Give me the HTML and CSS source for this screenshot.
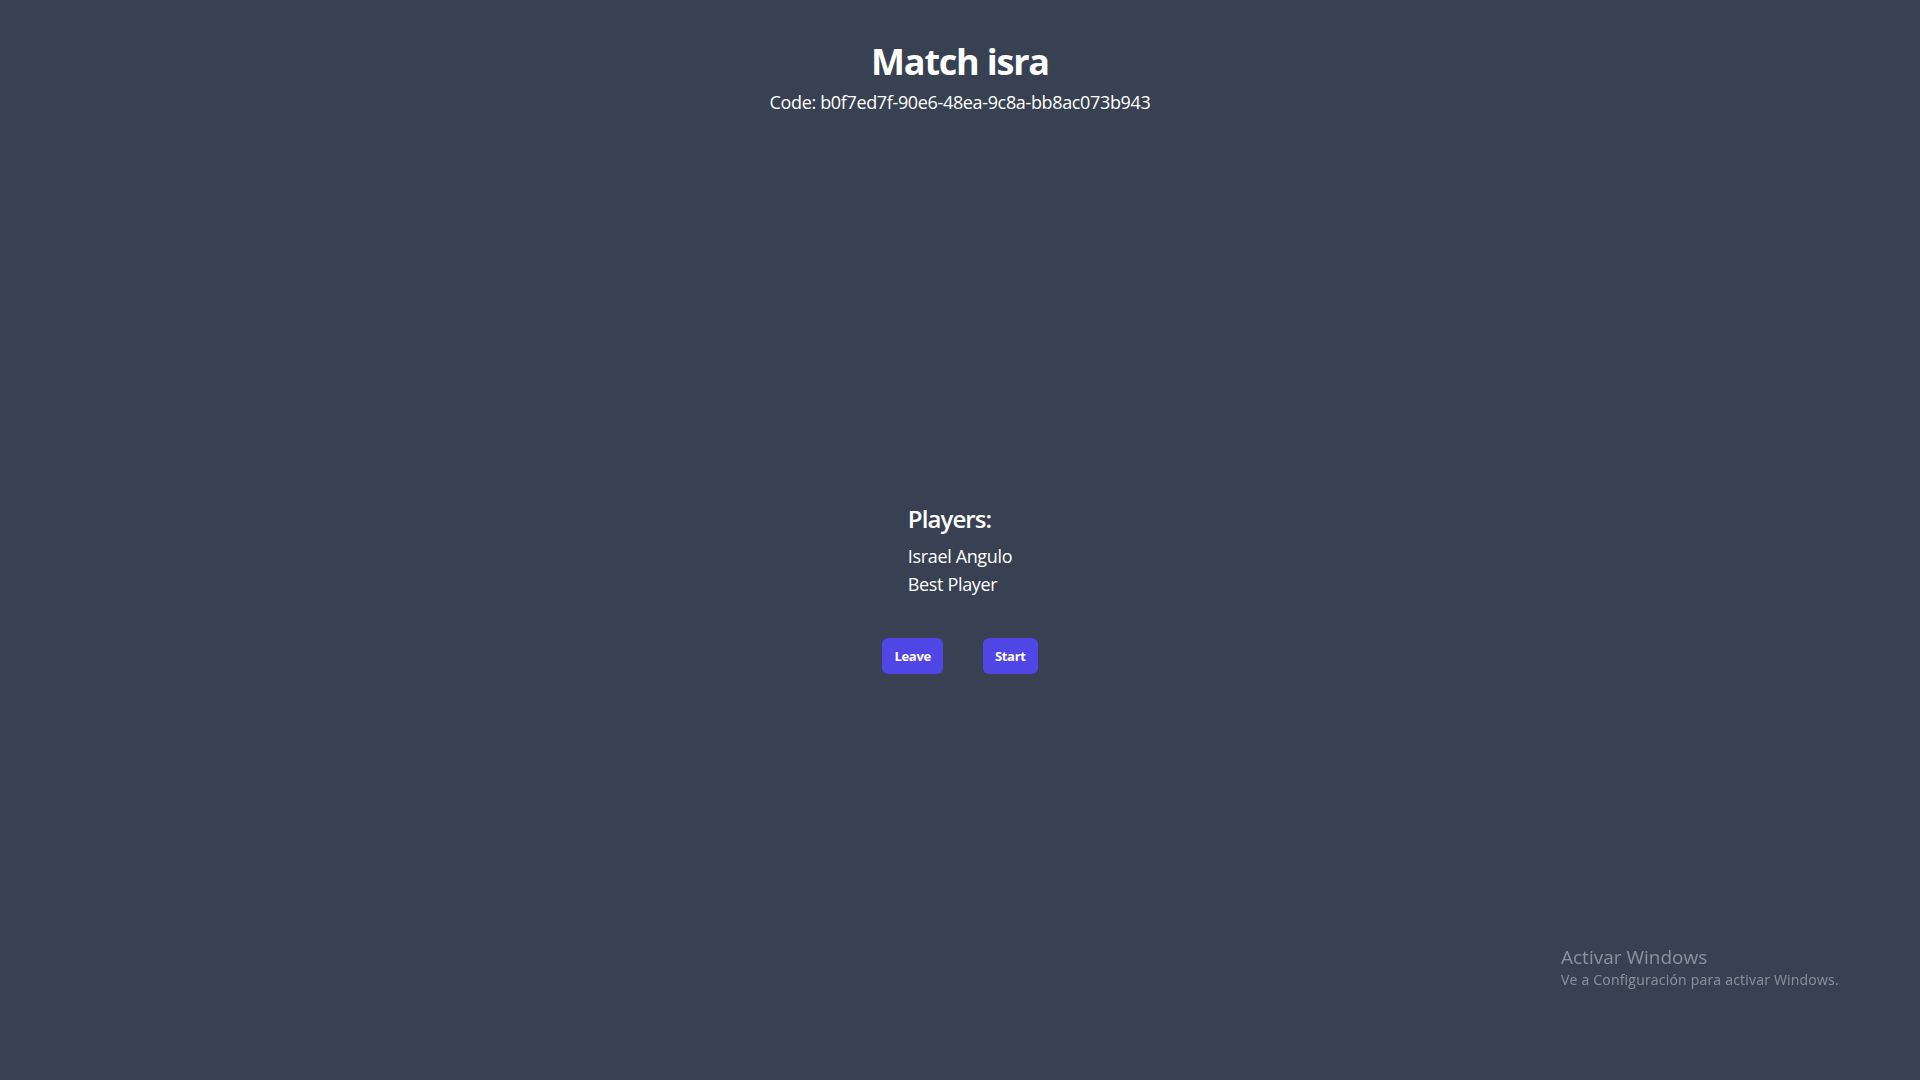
FILE: index.html
```html
<!DOCTYPE html>
<html lang="en">
<head>
<meta charset="utf-8">
<title>Match isra</title>
<link rel="stylesheet" href="styles.css">
</head>
<body>
<div class="page">
  <header class="header">
    <h1 class="title">Match isra</h1>
    <p class="code">Code: b0f7ed7f-90e6-48ea-9c8a-bb8ac073b943</p>
  </header>
  <main class="lobby">
    <section class="players">
      <h2 class="players-title">Players:</h2>
      <ul class="players-list">
        <li>Israel Angulo</li>
        <li>Best Player</li>
      </ul>
    </section>
    <div class="actions">
      <button class="btn">Leave</button>
      <button class="btn">Start</button>
    </div>
  </main>
</div>
<div class="watermark">
  <div class="wm-title">Activar Windows</div>
  <div class="wm-sub">Ve a Configuración para activar Windows.</div>
</div>
</body>
</html>
```
FILE: styles.css
```css
html, body {
  margin: 0;
  padding: 0;
  height: 100%;
}
body {
  background: #374151;
  color: #ffffff;
  font-family: "Open Sans", "Noto Sans", sans-serif;
}
.page {
  display: flex;
  flex-direction: column;
  align-items: center;
  padding-top: 42px;
}
.header {
  display: flex;
  flex-direction: column;
  align-items: center;
}
.title {
  margin: 0 0 6px;
  font-size: 36px;
  line-height: 40px;
  font-weight: 700;
  letter-spacing: -1.2px;
}
.code {
  margin: 0;
  font-size: 18px;
  line-height: 28px;
  letter-spacing: -0.35px;
}
.lobby {
  margin-top: 387px;
  display: flex;
  flex-direction: column;
  align-items: center;
}
.players {
  display: flex;
  flex-direction: column;
  align-items: flex-start;
}
.players-title {
  margin: 0 0 7px;
  font-size: 24px;
  line-height: 32px;
  font-weight: 600;
  letter-spacing: -0.9px;
}
.players-list {
  list-style: none;
  margin: 0;
  padding: 0;
  font-size: 18px;
  line-height: 28px;
  letter-spacing: -0.35px;
}
.actions {
  margin-top: 40px;
  display: flex;
  gap: 40px;
}
.btn {
  background: #4f46e5;
  color: #ffffff;
  border: 0;
  border-radius: 6px;
  padding: 8px 12px;
  font-family: "Open Sans", sans-serif;
  font-size: 13px;
  line-height: 20px;
  font-weight: 700;
  letter-spacing: -0.3px;
}
.watermark {
  position: fixed;
  left: 1561px;
  top: 944px;
  color: rgba(255, 255, 255, 0.42);
  font-family: "Open Sans", sans-serif;
}
.wm-title {
  font-size: 19px;
  line-height: 26px;
}
.wm-sub {
  font-size: 14px;
  line-height: 20px;
  letter-spacing: 0.2px;
}
```
